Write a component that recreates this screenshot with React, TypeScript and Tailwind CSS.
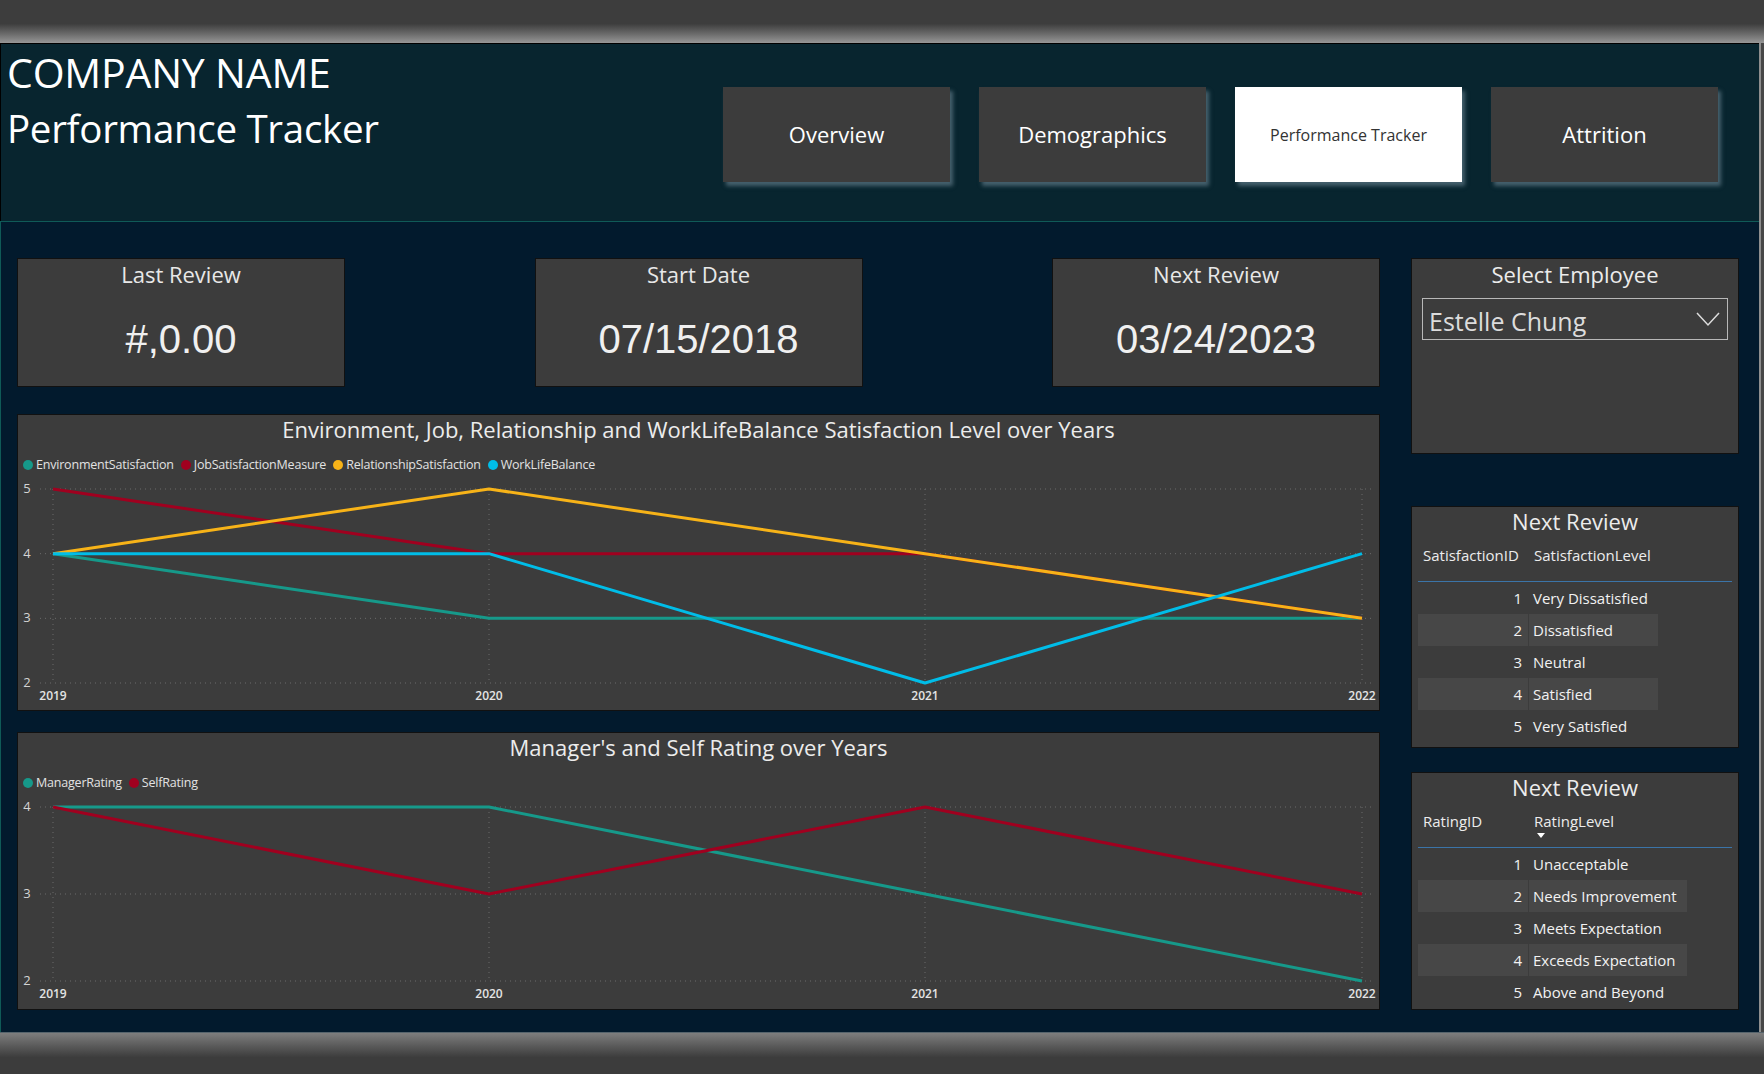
import React from "react";

type Series = { name: string; color: string; values: number[] };

const XS = [35, 471, 907, 1344];
const YEARS = [2019, 2020, 2021, 2022];

const TEAL = "#16998a";
const RED = "#a0001f";
const ORANGE = "#f7b318";
const CYAN = "#00bde8";

function KpiCard({ title, value }: { title: string; value: string }) {
  return (
    <div className="w-[328px] h-[129px] flex flex-col bg-[#3c3c3c] border border-[#111]">
      <div className="h-[30px] flex items-center justify-center text-[22px] text-[#e8e8e8]">{title}</div>
      <div className="flex-1 flex items-center justify-center pt-[3px] font-['Liberation_Sans',Arial,sans-serif] text-[40px] text-[#f0f0f0]">
        {value}
      </div>
    </div>
  );
}

function Legend({ series }: { series: Series[] }) {
  return (
    <div className="h-[36px] flex items-center gap-[7px] pl-[5px]">
      {series.map((s) => (
        <div key={s.name} className="flex items-center gap-[3px]">
          <span className="w-[10px] h-[10px] rounded-full" style={{ backgroundColor: s.color }} />
          <span className="text-[12.5px] text-[#e2e2e2] tracking-[-0.2px]">{s.name}</span>
        </div>
      ))}
    </div>
  );
}

function LineChart({
  title,
  series,
  ticks,
  top,
  bottom,
  className,
}: {
  title: string;
  series: Series[];
  ticks: number[];
  top: number;
  bottom: number;
  className: string;
}) {
  const max = ticks[0];
  const min = ticks[ticks.length - 1];
  const y = (v: number) => top + ((max - v) / (max - min)) * (bottom - top);

  return (
    <div className={`flex flex-col bg-[#3c3c3c] border border-[#111] ${className}`}>
      <div className="h-[32px] flex items-center justify-center pb-[3px] text-[22px] text-[#ececec]">{title}</div>
      <Legend series={series} />
      <svg className="flex-1 w-full overflow-visible" fontFamily="Open Sans, sans-serif">
        {ticks.map((t) => (
          <g key={t}>
            <line x1={22} x2={1354} y1={y(t)} y2={y(t)} stroke="#6b6b6b" strokeWidth={1} strokeDasharray="1 4" />
            <text x={9} y={y(t) + 4} textAnchor="middle" fontSize={13} fill="#d4d4d4">
              {t}
            </text>
          </g>
        ))}
        {XS.map((x, i) => (
          <g key={x}>
            <line x1={x} x2={x} y1={top} y2={bottom} stroke="#6b6b6b" strokeWidth={1} strokeDasharray="1 4" />
            <text x={x} y={bottom + 17} textAnchor="middle" fontSize={12} fontWeight={600} fill="#e4e4e4">
              {YEARS[i]}
            </text>
          </g>
        ))}
        {series.map((s) => (
          <polyline
            key={s.name}
            points={s.values.map((v, i) => `${XS[i]},${y(v)}`).join(" ")}
            fill="none"
            stroke={s.color}
            strokeWidth={3}
            strokeLinejoin="round"
          />
        ))}
      </svg>
    </div>
  );
}

function LookupTable({
  cols,
  widths,
  rows,
  sortCol,
  className,
}: {
  cols: [string, string];
  widths: string;
  rows: [number, string][];
  sortCol?: boolean;
  className: string;
}) {
  return (
    <div className={`flex flex-col bg-[#3c3c3c] border border-[#111] ${className}`}>
      <div className="h-[29px] flex items-center justify-center text-[22px] text-[#ececec]">Next Review</div>
      <div className="px-[6px]">
        <div className={`grid ${widths} h-[46px] border-b border-[#3b74a8] text-[15px] text-[#ececec]`}>
          <div className="pt-[7px] pl-[5px] leading-[24px]">{cols[0]}</div>
          <div className="pt-[7px] pl-[6px] leading-[24px] flex flex-col items-start">
            <span>{cols[1]}</span>
            {sortCol ? (
              <span className="ml-[3px] w-0 h-0 border-l-[4px] border-r-[4px] border-t-[5px] border-l-transparent border-r-transparent border-t-white" />
            ) : null}
          </div>
        </div>
        {rows.map(([id, label], i) => (
          <div key={id} className={`grid ${widths} gap-x-px h-[32px] text-[15px] text-[#f2f2f2]`}>
            <div className={`flex items-center justify-end pr-[6px] ${i % 2 === 1 ? "bg-[#474747]" : ""}`}>{id}</div>
            <div className={`flex items-center pl-[4px] whitespace-nowrap ${i % 2 === 1 ? "bg-[#474747]" : ""}`}>{label}</div>
          </div>
        ))}
      </div>
    </div>
  );
}

const navItems = ["Overview", "Demographics", "Performance Tracker", "Attrition"];

export default function App() {
  const satisfaction: Series[] = [
    { name: "EnvironmentSatisfaction", color: TEAL, values: [4, 3, 3, 3] },
    { name: "JobSatisfactionMeasure", color: RED, values: [5, 4, 4, 3] },
    { name: "RelationshipSatisfaction", color: ORANGE, values: [4, 5, 4, 3] },
    { name: "WorkLifeBalance", color: CYAN, values: [4, 4, 2, 4] },
  ];
  const ratings: Series[] = [
    { name: "ManagerRating", color: TEAL, values: [4, 4, 3, 2] },
    { name: "SelfRating", color: RED, values: [4, 3, 4, 3] },
  ];

  return (
    <div className="w-[1764px] h-[1074px] flex flex-col bg-[#3c3c3c] font-['Open_Sans',sans-serif] overflow-hidden">
      {/* window frame top */}
      <div className="h-[43px] bg-linear-to-b from-[#3d3d3d] from-55% to-[#979797]" />

      <div className="flex">
        <div className="w-[1759px] flex flex-col">
          {/* Header */}
          <div className="h-[178px] flex items-start bg-[#08252f] border-t border-l border-black pl-[6px] pr-[41px]">
            <div className="text-white">
              <div className="h-[56px] leading-[56px] text-[41px] tracking-[-0.2px]">COMPANY NAME</div>
              <div className="h-[56px] leading-[56px] text-[38.5px] tracking-[-0.3px]">Performance Tracker</div>
            </div>
            <div className="ml-auto mt-[43px] flex gap-[29px]">
              {navItems.map((n) => (
                <div
                  key={n}
                  className={
                    n === "Performance Tracker"
                      ? "w-[227px] h-[95px] flex items-center justify-center bg-white text-[16px] text-[#333] shadow-[3px_4px_4px_rgba(120,145,160,0.55)]"
                      : "w-[227px] h-[95px] flex items-center justify-center bg-[#3c3c3c] text-[22px] text-white shadow-[3px_4px_4px_rgba(120,145,160,0.55)]"
                  }
                >
                  {n}
                </div>
              ))}
            </div>
          </div>

          {/* Main */}
          <div className="h-[811px] flex gap-[31px] bg-[#021a2d] border-t border-l border-[#0f5a57] pt-[36px] pl-[16px] pr-[20px]">
            <div className="w-[1363px] flex flex-col">
              <div className="flex justify-between">
                <KpiCard title="Last Review" value="#,0.00" />
                <KpiCard title="Start Date" value="07/15/2018" />
                <KpiCard title="Next Review" value="03/24/2023" />
              </div>
              <LineChart
                title="Environment, Job, Relationship and WorkLifeBalance Satisfaction Level over Years"
                series={satisfaction}
                ticks={[5, 4, 3, 2]}
                top={6}
                bottom={200}
                className="mt-[27px] h-[297px]"
              />
              <LineChart
                title="Manager's and Self Rating over Years"
                series={ratings}
                ticks={[4, 3, 2]}
                top={6}
                bottom={180}
                className="mt-[21px] h-[278px]"
              />
            </div>

            <div className="w-[328px] flex flex-col">
              <div className="h-[196px] flex flex-col bg-[#3c3c3c] border border-[#111]">
                <div className="h-[30px] flex items-center justify-center text-[22px] text-[#ececec]">Select Employee</div>
                <div className="mt-[9px] mx-[10px] h-[42px] flex items-center justify-between border border-[#b8b8b8] pl-[6px] pr-[7px]">
                  <span className="pt-[5px] text-[25px] text-[#dcdcdc]">Estelle Chung</span>
                  <svg width="24" height="15" viewBox="0 0 24 15">
                    <polyline points="1,1 12,13 23,1" fill="none" stroke="#dcdcdc" strokeWidth={1.5} />
                  </svg>
                </div>
              </div>
              <LookupTable
                cols={["SatisfactionID", "SatisfactionLevel"]}
                widths="grid-cols-[110px_129px]"
                rows={[
                  [1, "Very Dissatisfied"],
                  [2, "Dissatisfied"],
                  [3, "Neutral"],
                  [4, "Satisfied"],
                  [5, "Very Satisfied"],
                ]}
                className="mt-[52px] h-[242px]"
              />
              <LookupTable
                cols={["RatingID", "RatingLevel"]}
                widths="grid-cols-[110px_158px]"
                rows={[
                  [1, "Unacceptable"],
                  [2, "Needs Improvement"],
                  [3, "Meets Expectation"],
                  [4, "Exceeds Expectation"],
                  [5, "Above and Beyond"],
                ]}
                sortCol
                className="mt-[24px] h-[238px]"
              />
            </div>
          </div>
        </div>
        <div className="w-[5px] bg-[#474747] border-l-2 border-[#8e8e8e]" />
      </div>

      {/* window frame bottom */}
      <div className="h-[42px] bg-linear-to-b from-[#7e7e7e] to-[#3c3c3c] to-60% border-t border-[#56646c]" />
    </div>
  );
}
